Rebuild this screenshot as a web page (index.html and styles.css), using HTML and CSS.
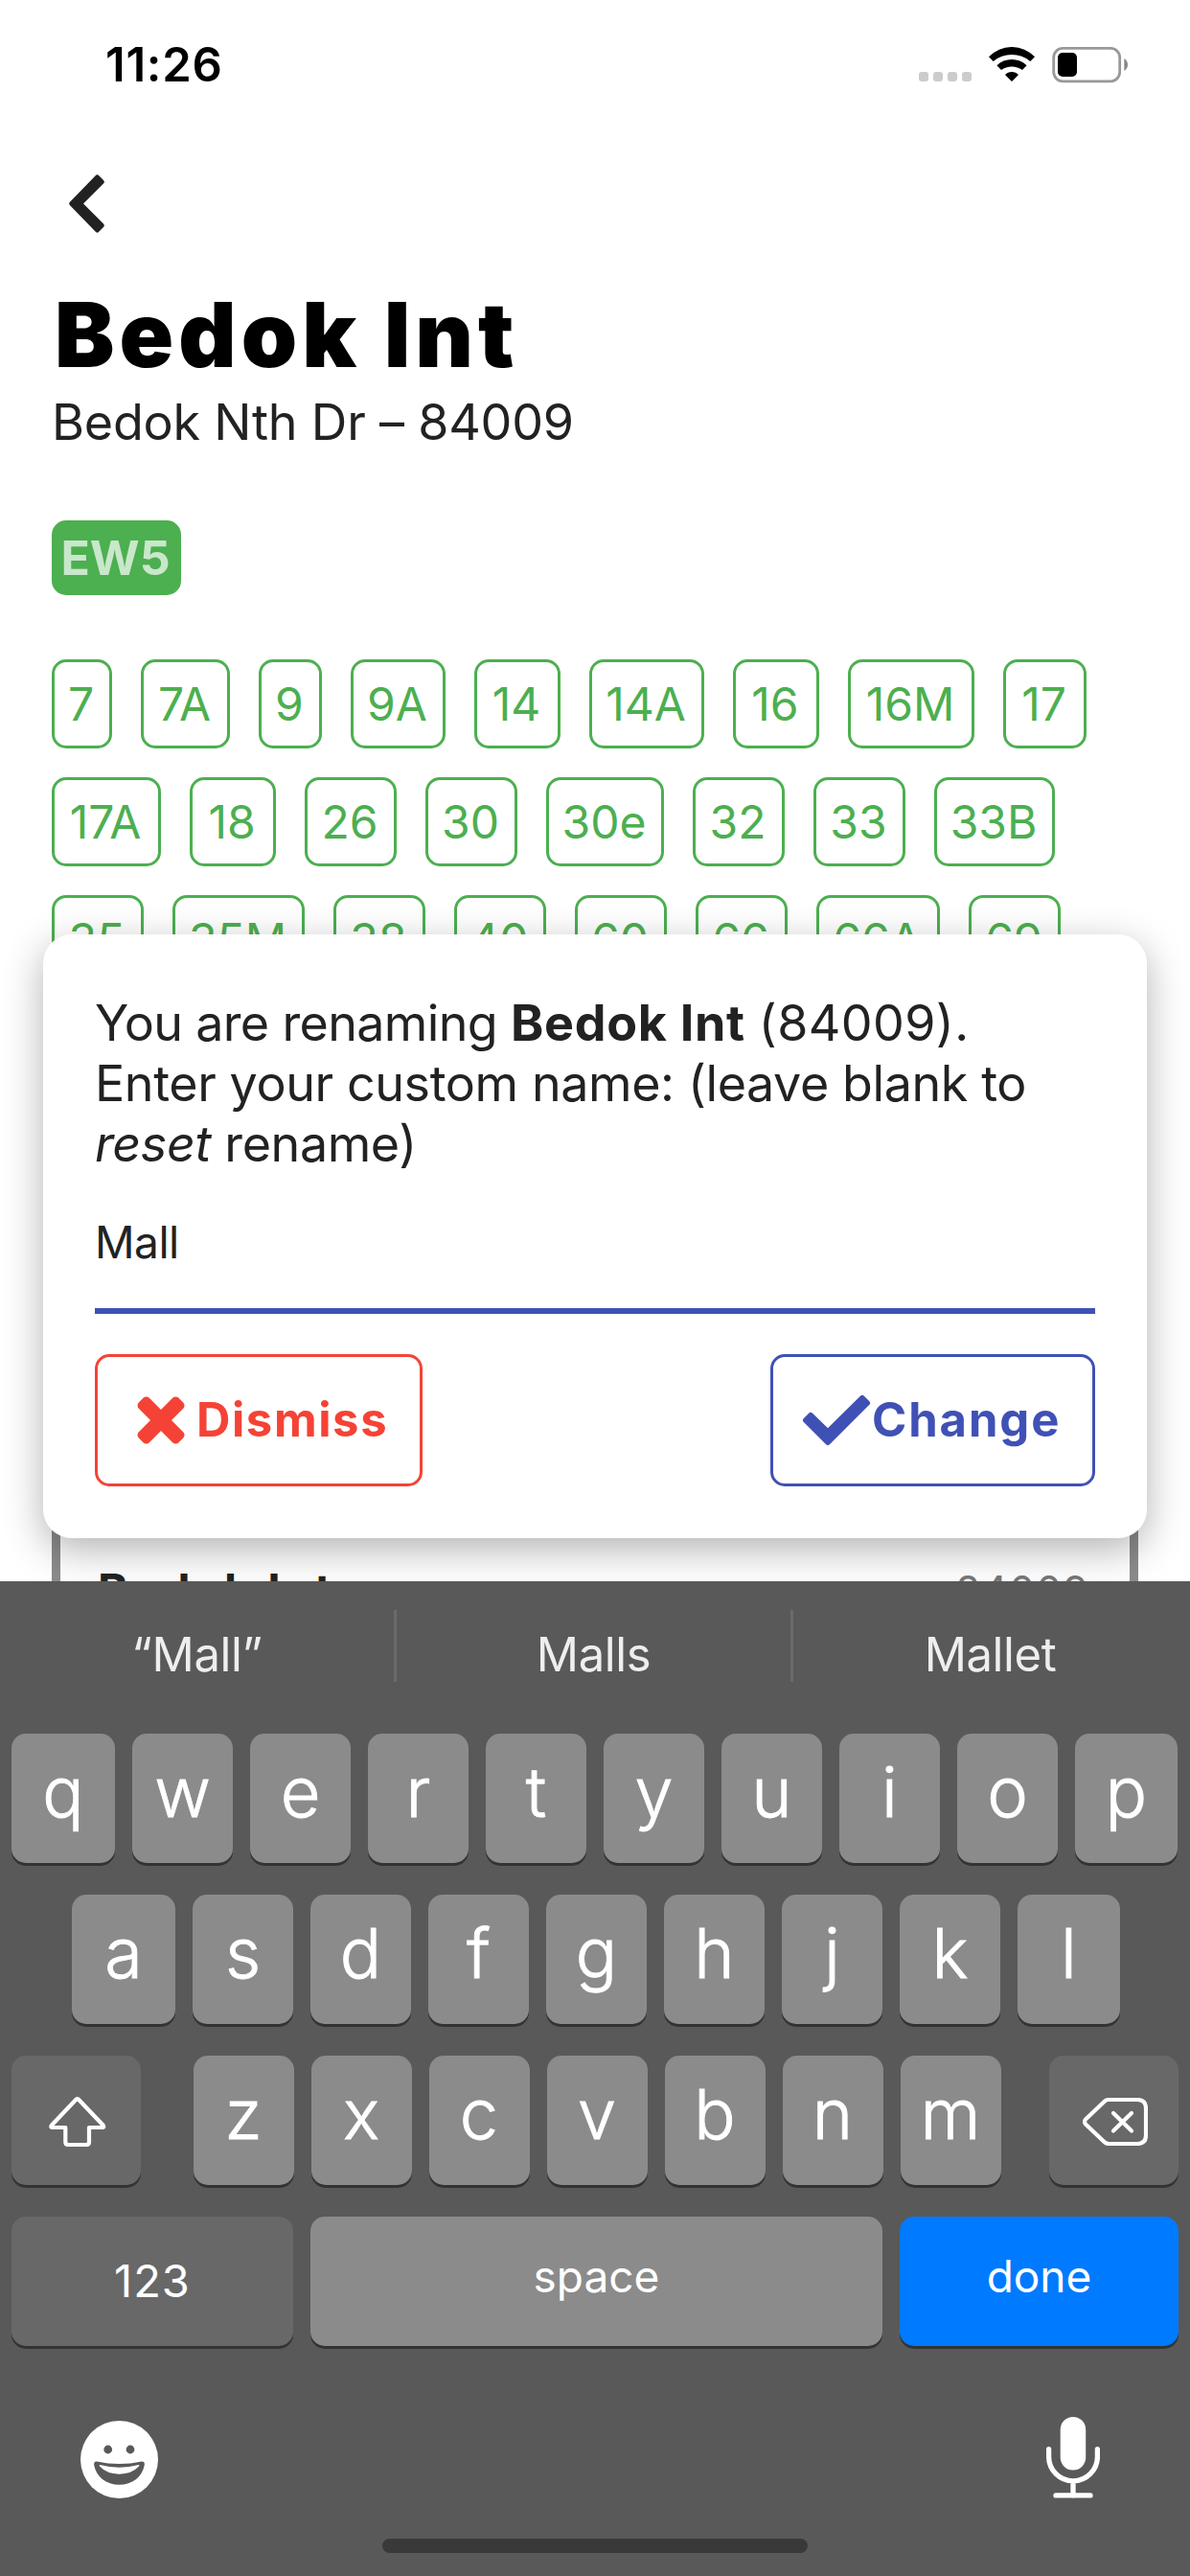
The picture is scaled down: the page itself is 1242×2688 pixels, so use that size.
FILE: index.html
```html
<!DOCTYPE html>
<html lang="en">
<head>
<meta charset="utf-8">
<title>Bedok Int</title>
<link rel="stylesheet" href="styles.css">
</head>
<body>
<div class="screen">
  <main class="app">
    <header class="status">
      <span class="time">11:26</span>
      <span class="dots"><i></i><i></i><i></i><i></i></span>
      <svg class="wifi" viewBox="0 0 48 36"><path d="M0 10.3A33.1 33.1 0 0 1 48 10.3L43.3 15A30 30 0 0 0 4.7 15ZM8.4 19.2A22.7 22.7 0 0 1 39.6 19.2L35 24A19 19 0 0 0 13 24ZM17 29A9.5 9.5 0 0 1 31 29L24 36Z"/></svg>
      <svg class="battery" viewBox="0 0 80 38"><rect x="1.7" y="1.4" width="69" height="34.4" rx="9.5" fill="none" stroke="#999" stroke-width="2.8"/><rect x="6" y="6" width="20" height="25" rx="5"/><path d="M75.3 12Q79 14.5 79 18.5T75.3 25Z" fill="#888"/></svg>
    </header>

    <nav class="nav">
      <svg class="back" viewBox="0 0 37 61"><path d="M29.5 3L34.2 7.7L11.5 30.5L34.2 53.3L29.5 58L2.8 30.5Z"/></svg>
    </nav>

    <section class="stop">
      <h1 class="title">Bedok Int</h1>
      <p class="subtitle">Bedok Nth Dr – 84009</p>
      <span class="station">EW5</span>
      <div class="services">
        <div class="row row-1"><span>7</span><span>7A</span><span>9</span><span>9A</span><span>14</span><span>14A</span><span>16</span><span>16M</span><span>17</span></div>
        <div class="row row-2"><span>17A</span><span>18</span><span>26</span><span>30</span><span>30e</span><span>32</span><span>33</span><span>33B</span></div>
        <div class="row row-3"><span>35</span><span>35M</span><span>38</span><span>40</span><span>60</span><span>66</span><span>66A</span><span>69</span></div>
      </div>
      <article class="card">
        <b class="card-name">Bedok Int</b>
        <span class="card-code">84009</span>
      </article>
    </section>

    <section class="modal">
      <p class="prompt">You are renaming <b>Bedok Int</b> <span class="code">(84009).</span><br><span class="line-2">Enter your custom name: (leave blank to</span><br><span class="line-3"><em>reset</em> rename)</span></p>
      <div class="field">Mall</div>
      <div class="actions">
        <button class="btn dismiss"><svg class="cross" viewBox="0 0 50 50"><rect x="-4.5" y="17.2" width="59" height="15.6" rx="4.5" transform="rotate(45 25 25)"/><rect x="-4.5" y="17.2" width="59" height="15.6" rx="4.5" transform="rotate(-45 25 25)"/></svg>Dismiss</button>
        <button class="btn change"><svg class="check" viewBox="0 0 72 54"><path d="M4 27L9 22L27 39.4L63 4L68 9L27 50Z"/></svg>Change</button>
      </div>
    </section>
  </main>

  <section class="keyboard">
    <div class="suggestions"><span>“Mall”</span><span>Malls</span><span>Mallet</span></div>
    <div class="keys keys-1"><kbd>q</kbd><kbd>w</kbd><kbd>e</kbd><kbd>r</kbd><kbd>t</kbd><kbd>y</kbd><kbd>u</kbd><kbd>i</kbd><kbd>o</kbd><kbd>p</kbd></div>
    <div class="keys keys-2"><kbd>a</kbd><kbd>s</kbd><kbd>d</kbd><kbd>f</kbd><kbd>g</kbd><kbd>h</kbd><kbd>j</kbd><kbd>k</kbd><kbd>l</kbd></div>
    <div class="keys keys-3">
      <kbd class="dark icon"><svg class="shift" viewBox="0 0 60 52"><path d="M28.4 2.8L3 29.5Q1.2 32 4 32H17.3V47Q17.3 50 20.3 50H39Q42 50 42 47V32H55.5Q58.3 32 56.5 29.5L31 2.8Q29.7 1.6 28.4 2.8Z"/></svg></kbd>
      <div class="letters"><kbd>z</kbd><kbd>x</kbd><kbd>c</kbd><kbd>v</kbd><kbd>b</kbd><kbd>n</kbd><kbd>m</kbd></div>
      <kbd class="dark icon"><svg class="delete" viewBox="0 0 68 50"><path d="M27.5 2H57Q66 2 66 11V39Q66 48 57 48H27.5Q24.5 48 22.5 46L3 27.5Q1 25 3 22.5L22.5 4Q24.5 2 27.5 2Z"/><path d="M32 16L51 34.5M51 16L32 34.5"/></svg></kbd>
    </div>
    <div class="keys keys-4"><kbd class="dark word num">123</kbd><kbd class="word">space</kbd><kbd class="blue word">done</kbd></div>
    <div class="tray">
      <svg class="emoji" viewBox="0 0 81 81"><circle cx="40.5" cy="40.5" r="40.5" fill="#fff"/><circle cx="28.7" cy="30" r="4.4"/><circle cx="52" cy="30" r="4.4"/><path d="M17 42.5Q40.5 47.5 64 42.5Q67.5 42.5 66.7 46.5C64.5 58.5 54 66.8 40.5 66.8S16.5 58.5 14.2 46.5Q13.7 42 17 42.5Z"/><path d="M20.2 46Q40.5 51.3 60.8 46Q62 46.3 61 47.6Q53.5 55.7 40.5 55.7T20 47.6Q19 46.3 20.2 46Z" fill="#fff"/></svg>
      <svg class="mic" viewBox="0 0 56 85"><rect x="14.7" y="0" width="26.5" height="55.5" rx="13.2" fill="#fff"/><path d="M2.6 33.6V41.5A25.4 25.4 0 0 0 53.4 41.5V33.6M28 67V82M10 81.9H46"/></svg>
    </div>
    <div class="home"></div>
  </section>
</div>
</body>
</html>
```
FILE: styles.css
```css
* { box-sizing: border-box; }

body {
  margin: 0;
  font-family: Inter, "Liberation Sans", sans-serif;
  color: #222;
}

h1, p { margin: 0; }
svg { display: block; flex: none; }

.screen {
  width: 1242px;
  height: 2688px;
  overflow: hidden;
}

.app {
  position: relative;
  height: 1650px;
  overflow: hidden;
  background: #fff;
}

/* Status bar */
.status {
  display: flex;
  align-items: flex-start;
  height: 132px;
  padding: 49px 64px 0 110px;
  color: #000;
}
.time {
  margin-top: -11px;
  font-size: 49px;
  line-height: 60px;
  font-weight: 600;
  letter-spacing: .7px;
}
.dots {
  display: flex;
  gap: 5px;
  margin: 26px 18px 0 auto;
}
.dots i {
  width: 10px;
  height: 10px;
  border-radius: 3px;
  background: #ccc;
}
.wifi { width: 48px; height: 36px; }
.battery { width: 80px; height: 38px; margin-left: 18px; }

.nav { height: 171px; padding: 50px 0 0 72px; }
.back {
  width: 37px;
  height: 61px;
  fill: #222;
  stroke: #222;
  stroke-width: 5;
  stroke-linejoin: round;
}

/* Stop heading */
.stop { padding: 0 54px; }
.title {
  padding-left: 3px;
  font-size: 93.5px;
  line-height: 93px;
  font-weight: 900;
  letter-spacing: 5.1px;
  color: #000;
}
.subtitle {
  margin-top: 13px;
  font-size: 52px;
  line-height: 63px;
  letter-spacing: -.2px;
}
.station {
  display: block;
  width: 135px;
  height: 78px;
  margin-top: 71px;
  padding-right: 2px;
  border-radius: 15px;
  background: #4caf50;
  color: #c9e7cb;
  font-size: 50px;
  line-height: 78px;
  font-weight: 700;
  text-align: center;
}

/* Service chips */
.services {
  display: grid;
  gap: 30px;
  margin-top: 67px;
}
.row { display: grid; column-gap: 30px; }
.row-1 { grid-template-columns: 63px 93px 66px 99px 90px 120px 90px 132px 87px; }
.row-2 { grid-template-columns: 114px 90px 96px 96px 123px 96px 96px 126px; }
.row-3 { grid-template-columns: 96px 138px 96px 96px 96px 96px 129px 96px; }
.row span {
  height: 93px;
  padding-right: 2px;
  border: 3px solid #4caf50;
  border-radius: 15px;
  color: #4caf50;
  font-size: 48px;
  line-height: 87px;
  text-align: center;
}

.card {
  display: flex;
  justify-content: space-between;
  height: 300px;
  margin-top: 513px;
  padding: 81px 42px 0 39px;
  border: 9px solid #8b8b8b;
}
.card-name { font-size: 48px; line-height: 60px; letter-spacing: 3px; }
.card-code { font-size: 42px; line-height: 60px; letter-spacing: 1.5px; color: #777; }

/* Rename dialog */
.modal {
  position: absolute;
  top: 975px;
  left: 45px;
  width: 1152px;
  height: 630px;
  padding: 61px 54px 0;
  border-radius: 30px;
  background: #fff;
  box-shadow: 0 12px 42px rgba(0, 0, 0, .3);
}
.prompt {
  font-size: 52px;
  line-height: 63px;
  letter-spacing: -.65px;
  white-space: nowrap;
}
.prompt b { letter-spacing: .7px; }
.code { letter-spacing: .4px; }
.line-2 { letter-spacing: -.4px; }
.line-3 { letter-spacing: -.4px; }
.field {
  height: 146px;
  border-bottom: 6px solid #3f51b5;
  padding-top: 38px;
  font-size: 46px;
  line-height: 66px;
  letter-spacing: -.5px;
}
.actions {
  display: flex;
  justify-content: space-between;
  margin-top: 42px;
}
.btn {
  display: flex;
  align-items: center;
  height: 138px;
  border: 3px solid currentColor;
  border-radius: 15px;
  background: none;
  font: 700 49px/60px Inter, "Liberation Sans", sans-serif;
  padding: 0;
}
.dismiss { width: 342px; padding-left: 41px; color: #f44336; letter-spacing: 1.6px; }
.change { width: 339px; padding-left: 30px; color: #3f51b5; letter-spacing: 1.9px; }
.cross { width: 50px; height: 50px; margin-right: 12px; fill: currentColor; }
.check {
  width: 72px;
  height: 54px;
  margin-right: 1px;
  fill: currentColor;
  stroke: currentColor;
  stroke-width: 6;
  stroke-linejoin: round;
}

/* Keyboard */
.keyboard {
  height: 1038px;
  padding-top: 30px;
  background: #595959;
  color: #fff;
}
.suggestions {
  display: grid;
  grid-template-columns: repeat(3, 1fr);
  height: 129px;
}
.suggestions span {
  height: 75px;
  border-right: 3px solid #6b6b6b;
  color: #eee;
  font-size: 49px;
  line-height: 94px;
  letter-spacing: -.4px;
  text-align: center;
}
.suggestions span:last-child { border-right-color: transparent; }

.keys {
  display: grid;
  column-gap: 18px;
  height: 168px;
}
.keys-1 { padding-left: 12px; grid-template-columns: 108px repeat(8, 105px) 107px; }
.keys-2 { padding-left: 75px; grid-template-columns: 108px repeat(7, 105px) 107px; }
.keys-3 { padding: 0 12px; grid-template-columns: 135px 843px 135px; column-gap: 0; justify-content: space-between; }
.letters { display: grid; grid-template-columns: repeat(7, 105px); column-gap: 18px; margin-left: 2px; }
.keys-4 { padding-left: 12px; grid-template-columns: 294px 597px 291px; }
kbd {
  height: 135px;
  border-radius: 15px;
  background: #8b8b8b;
  box-shadow: 0 3px 0 #333;
  font: 300 72px/122px Inter, "Liberation Sans", sans-serif;
  text-align: center;
  -webkit-text-stroke: .9px #fff;
}
.dark { background: #686868; }
.blue { background: #007aff; }
.word {
  font-size: 46px;
  line-height: 124px;
  font-weight: 400;
  -webkit-text-stroke: 0;
}
.num { line-height: 134px; font-size: 47px; letter-spacing: 1px; }
.icon {
  display: flex;
  align-items: center;
  justify-content: center;
  padding-top: 3px;
}
.icon svg, .mic path {
  fill: none;
  stroke: #fff;
  stroke-width: 4.2;
  stroke-linecap: round;
  stroke-linejoin: round;
}
.shift { width: 60px; height: 52px; margin-left: 3px; }
.delete { width: 68px; height: 50px; margin-left: 2px; }

.tray {
  display: flex;
  justify-content: space-between;
  height: 168px;
  padding: 41px 94px 0 84px;
}
.emoji { width: 81px; height: 81px; margin-top: 4px; fill: #595959; }
.mic { width: 56px; height: 85px; }
.mic path { stroke-width: 5.3; }
.home {
  width: 444px;
  height: 15px;
  margin: 0 auto;
  border-radius: 8px;
  background: #393939;
}
```
